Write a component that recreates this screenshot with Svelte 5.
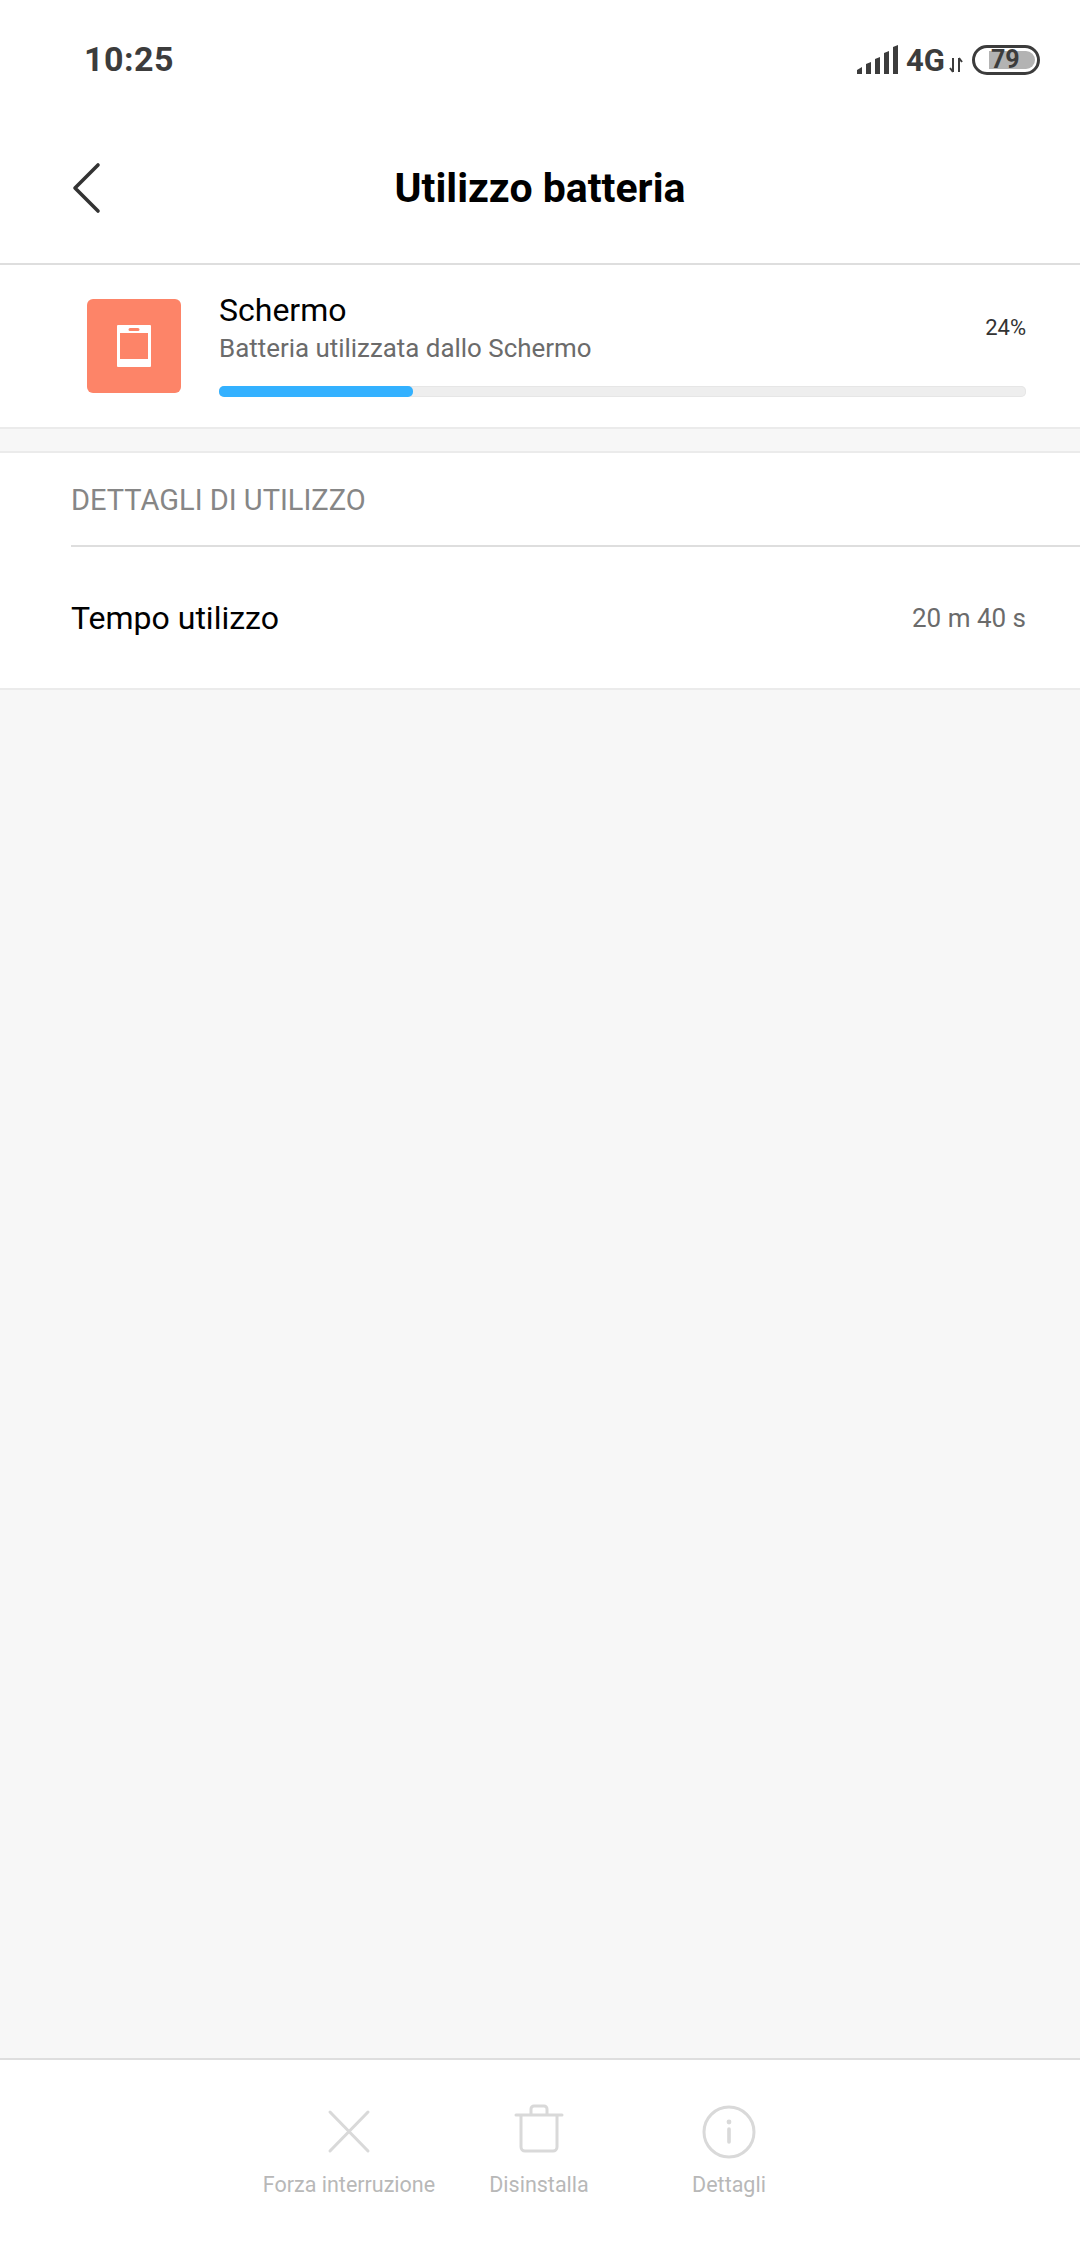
<script lang="ts">
    const actions = [
        { label: "Forza interruzione", icon: "close" },
        { label: "Disinstalla", icon: "trash" },
        { label: "Dettagli", icon: "info" }
    ];
</script>

<div class="page">
    <div class="status-bar">
        <span class="time">10:25</span>
        <div class="status-right">
            <svg class="signal" width="41" height="30" viewBox="0 0 41 30">
                <path d="M0 29v-4l5-3v7zM9 29v-10l5-2v12zM18 29v-15l5-2v17zM27 29v-21l5-2v23zM36 29v-27l5-2v29z" fill="#3c3c3c" />
            </svg>
            <span class="net">4G</span>
            <svg class="arrows" width="14" height="16" viewBox="0 0 14 16">
                <path d="M4 1v14M1 11l3 4M10 15V1M13 5l-3-4" stroke="#3c3c3c" stroke-width="2" fill="none" />
            </svg>
            <div class="battery">
                <div class="battery-fill"></div>
                <span class="battery-num">79</span>
            </div>
        </div>
    </div>

    <div class="title-bar">
        <svg class="back" width="30" height="52" viewBox="0 0 30 52">
            <path d="M26 3 3 26l23 23" stroke="#333" stroke-width="3.6" stroke-linecap="round" stroke-linejoin="round" fill="none" />
        </svg>
        <h1>Utilizzo batteria</h1>
    </div>

    <div class="app-card">
        <div class="app-icon">
            <svg width="34" height="42" viewBox="0 0 34 42">
                <path fill-rule="evenodd" d="M1 0h32a1 1 0 0 1 1 1v40a1 1 0 0 1-1 1H1a1 1 0 0 1-1-1V1a1 1 0 0 1 1-1zM3 8v26h28V8zM13 3a1 1 0 0 0 0 3h8a1 1 0 0 0 0-3z" fill="#fff" />
            </svg>
        </div>
        <div class="app-info">
            <div class="app-top">
                <div>
                    <div class="app-name">Schermo</div>
                    <div class="app-sub">Batteria utilizzata dallo Schermo</div>
                </div>
                <span class="pct">24%</span>
            </div>
            <div class="bar">
                <div class="bar-fill" style="width: 24%"></div>
            </div>
        </div>
    </div>

    <div class="details">
        <div class="section-head"><span>DETTAGLI DI UTILIZZO</span></div>
        <div class="row">
            <span class="row-label">Tempo utilizzo</span>
            <span class="row-value">20 m 40 s</span>
        </div>
    </div>

    <div class="spacer"></div>

    <div class="footer">
        {#each actions as a}
            <div class="action">
                <svg width="60" height="60" viewBox="0 0 60 60">
                    {#if a.icon === "close"}
                        <path d="M11 10l38 39M49 10 11 49" stroke="#d9d9d9" stroke-width="3" stroke-linecap="round" fill="none" />
                    {:else if a.icon === "trash"}
                        <path d="M7 13h46M12 13v32a4 4 0 0 0 4 4h28a4 4 0 0 0 4-4V13M22 13V7a3 3 0 0 1 3-3h10a3 3 0 0 1 3 3v6" stroke="#d9d9d9" stroke-width="3" stroke-linecap="round" fill="none" />
                    {:else}
                        <circle cx="30" cy="30" r="25" stroke="#d9d9d9" stroke-width="3" fill="none" />
                        <circle cx="30" cy="20" r="2.4" fill="#d9d9d9" />
                        <path d="M30 27v13" stroke="#d9d9d9" stroke-width="3.6" stroke-linecap="round" />
                    {/if}
                </svg>
                <span>{a.label}</span>
            </div>
        {/each}
    </div>
</div>

<style>
    :global(body) {
        margin: 0;
    }

    .page {
        width: 1080px;
        height: 2248px;
        display: flex;
        flex-direction: column;
        background: #f7f7f7;
        font-family: Roboto, "Liberation Sans", sans-serif;
    }

    .status-bar {
        height: 117px;
        box-sizing: border-box;
        padding: 40px 40px 0 84px;
        background: #fff;
        display: flex;
        justify-content: space-between;
        align-items: flex-start;
        color: #3c3c3c;
    }

    .time {
        font-size: 34px;
        font-weight: 700;
        line-height: 38px;
        letter-spacing: 0.5px;
    }

    .status-right {
        display: flex;
        align-items: center;
        height: 40px;
    }

    .signal {
        margin-right: 8px;
    }

    .net {
        font-size: 31px;
        font-weight: 700;
    }

    .arrows {
        margin: 10px 9px 0 4px;
    }

    .battery {
        position: relative;
        width: 68px;
        height: 30px;
        box-sizing: border-box;
        border: 3px solid #3c3c3c;
        border-radius: 15px;
    }

    .battery-fill {
        position: absolute;
        left: 14px;
        top: 3px;
        width: 46px;
        height: 18px;
        background: #b3b3b3;
        border-radius: 0 9px 9px 0;
    }

    .battery-num {
        position: absolute;
        left: 16px;
        top: 0;
        font-size: 25px;
        font-weight: 700;
        line-height: 24px;
    }

    .title-bar {
        height: 146px;
        position: relative;
        background: #fff;
        border-bottom: 2px solid #dedede;
        display: flex;
        align-items: center;
        justify-content: center;
    }

    .back {
        position: absolute;
        left: 72px;
        top: 45px;
    }

    h1 {
        margin: 0 0 4px;
        font-size: 41px;
        font-weight: 700;
        color: #000;
    }

    .app-card {
        height: 164px;
        box-sizing: border-box;
        background: #fff;
        border-bottom: 2px solid #ebebeb;
        display: flex;
        padding: 34px 54px 0 87px;
    }

    .app-icon {
        width: 94px;
        height: 94px;
        flex: none;
        background: #fd8468;
        border-radius: 6px;
        display: flex;
        align-items: center;
        justify-content: center;
        margin-right: 38px;
    }

    .app-info {
        flex: 1;
    }

    .app-top {
        display: flex;
        justify-content: space-between;
        height: 87px;
    }

    .app-name {
        font-size: 32px;
        line-height: 36px;
        color: #000;
        margin-top: -7px;
    }

    .app-sub {
        font-size: 25.9px;
        line-height: 34px;
        color: #6b6b6b;
        margin-top: 3px;
    }

    .pct {
        font-size: 22px;
        color: #333;
        margin-top: 16px;
    }

    .bar {
        height: 11px;
        box-sizing: border-box;
        background: #eee;
        border-radius: 5px;
        box-shadow: inset 0 0 0 1px #e6e6e6;
    }

    .bar-fill {
        height: 11px;
        background: #33b1ff;
        border-radius: 5px;
    }

    .details {
        margin-top: 22px;
        background: #fff;
        border-top: 2px solid #ebebeb;
        border-bottom: 2px solid #ebebeb;
    }

    .section-head {
        margin-left: 71px;
        height: 92px;
        border-bottom: 2px solid #dedede;
        display: flex;
        align-items: center;
        font-size: 29px;
        color: #868686;
    }

    .section-head span {
        margin-top: 2px;
    }

    .row {
        height: 141px;
        display: flex;
        align-items: center;
        justify-content: space-between;
        padding: 0 54px 0 71px;
    }

    .row-label {
        font-size: 32px;
        color: #000;
    }

    .row-value {
        font-size: 26px;
        color: #6b6b6b;
    }

    .spacer {
        flex: 1;
    }

    .footer {
        height: 190px;
        box-sizing: border-box;
        background: #fff;
        border-top: 2px solid #dedede;
        display: flex;
        justify-content: center;
        padding-top: 42px;
    }

    .action {
        width: 190px;
        display: flex;
        flex-direction: column;
        align-items: center;
        color: #b8b8b8;
        font-size: 21.5px;
        white-space: nowrap;
        transform: translateX(-1px);
    }

    .action span {
        margin-top: 10px;
    }
</style>
